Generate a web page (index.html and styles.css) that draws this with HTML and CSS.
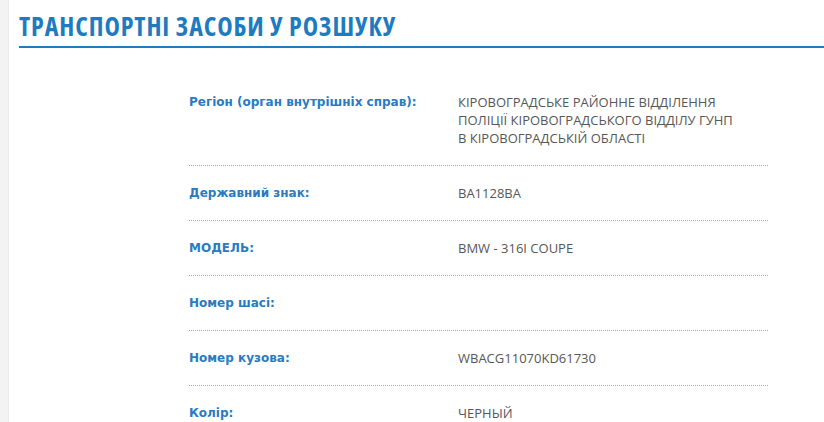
FILE: index.html
```html
<!DOCTYPE html>
<html lang="uk">

<head>
    <meta charset="UTF-8">
    <meta name="viewport" content="width=device-width, initial-scale=1.0">
    <title>Транспортні засоби у розшуку</title>
    <link rel="stylesheet" href="styles.css">
</head>

<body>
    <div class="page">
        <div class="side-strip"></div>

        <main class="main">
            <h1 class="page-title">ТРАНСПОРТНІ ЗАСОБИ У РОЗШУКУ</h1>

            <div class="card">
                <div class="card-row">
                    <div class="card-label">Регіон (орган внутрішніх справ):</div>
                    <div class="card-value">КІРОВОГРАДСЬКЕ РАЙОННЕ ВІДДІЛЕННЯ<br>ПОЛІЦІЇ КІРОВОГРАДСЬКОГО ВІДДІЛУ ГУНП<br>В КІРОВОГРАДСЬКІЙ ОБЛАСТІ</div>
                </div>
                <div class="card-row">
                    <div class="card-label">Державний знак:</div>
                    <div class="card-value">BA1128BA</div>
                </div>
                <div class="card-row">
                    <div class="card-label">МОДЕЛЬ:</div>
                    <div class="card-value">BMW - 316I COUPE</div>
                </div>
                <div class="card-row">
                    <div class="card-label">Номер шасі:</div>
                    <div class="card-value"></div>
                </div>
                <div class="card-row">
                    <div class="card-label">Номер кузова:</div>
                    <div class="card-value">WBACG11070KD61730</div>
                </div>
                <div class="card-row">
                    <div class="card-label">Колір:</div>
                    <div class="card-value">ЧЕРНЫЙ</div>
                </div>
            </div>
        </main>
    </div>
</body>

</html>
```

FILE: styles.css
```css
body {
    margin: 0;
    padding: 0;
    background-color: white;
    font-family: "DejaVu Sans", Verdana, sans-serif;
}

.page {
    display: flex;
    min-height: 422px;
}

.side-strip {
    width: 8px;
    flex-shrink: 0;
    background-color: #f3f3f3;
    border-right: 1px solid #ececec;
}

.main {
    flex: 1;
    padding-left: 10px;
}

.page-title {
    margin: 0;
    padding: 13px 0 7px 0;
    font-family: "Open Sans", "Liberation Sans Narrow", sans-serif;
    font-stretch: 75%;
    font-weight: 700;
    font-size: 26px;
    letter-spacing: 0.9px;
    line-height: 26px;
    color: #1e7bbf;
    border-bottom: 2px solid #1e7bbf;
}

.card {
    margin: 27px 0 0 170px;
    width: 579px;
}

.card-row {
    display: flex;
    padding: 18px 0 18px 0;
    line-height: 18px;
    border-bottom: 1px dotted #a8a8a8;
}

.card-label {
    width: 269px;
    flex-shrink: 0;
    font-size: 12px;
    font-weight: bold;
    color: #2a7bc0;
}

.card-value {
    font-family: "Open Sans", "Liberation Sans", sans-serif;
    font-size: 13px;
    color: #575757;
}
```
